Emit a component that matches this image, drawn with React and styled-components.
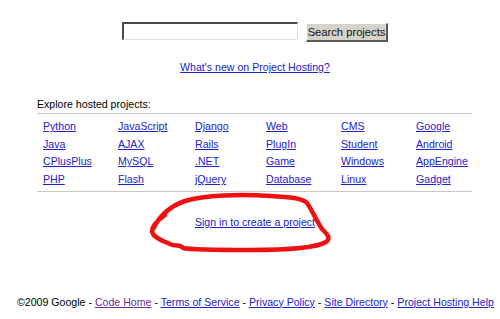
import React from 'react'
import styled, {createGlobalStyle} from 'styled-components'

const Global = createGlobalStyle`
body {
    margin: 0;
    background: #fff;
    font-family: "Liberation Sans", Arial, sans-serif;
    font-size: 10.6px;
    color: #000;
}
`

const Page = styled.div`
    position: relative;
    width: 500px;
    height: 319px;
    overflow: hidden;
`

const SearchRow = styled.form`
    display: flex;
    align-items: flex-start;
    gap: 8px;
    padding: 22px 0 0 122px;
    margin: 0;
`

const SearchInput = styled.input`
    box-sizing: border-box;
    width: 176px;
    height: 18px;
    margin: 0;
    padding: 0 2px;
    border-top: 2px solid #4a4a4a;
    border-left: 2px solid #4a4a4a;
    border-bottom: 1px solid #e4e2dc;
    border-right: 1px solid #e4e2dc;
    background: #fff;
    outline: none;
`

const SearchButton = styled.button`
    box-sizing: border-box;
    width: 82px;
    height: 19px;
    margin: 1px 0 0;
    padding: 0;
    white-space: nowrap;
    background: #d6d3cb;
    border-top: 1px solid #fff;
    border-left: 1px solid #fff;
    border-bottom: 2px solid #5a5a5a;
    border-right: 2px solid #5a5a5a;
    font-family: "Liberation Sans", Arial, sans-serif;
    font-size: 11.2px;
    color: #111;
`

const Link = styled.a`
    color: ${({visited}) => visited ? '#6b2d9c' : '#2222cc'};
    text-decoration: underline;
`

const Centered = styled.div`
    text-align: center;
    margin-top: ${({top}) => top}px;
    padding-left: 10px;
    line-height: 13px;
`

const Explore = styled.div`
    width: 435px;
    margin: 24px 0 0 37px;
`

const ExploreTitle = styled.div`
    line-height: 13px;
    padding-bottom: 2px;
    border-bottom: 1px solid #c8c8c8;
`

const Grid = styled.div`
    display: grid;
    grid-template-columns: 75px 77px 71px 75px 75px 62px;
    grid-auto-rows: 17.7px;
    padding: 6px 0 0;
    border-bottom: 1px solid #c8c8c8;
`

const Cell = styled.div`
    padding-left: 6px;
    line-height: 13px;
    white-space: nowrap;
`

const Footer = styled.div`
    margin-top: 67px;
    padding-left: 17px;
    line-height: 13px;
    white-space: nowrap;
`

const Scribble = styled.svg`
    position: absolute;
    left: 0;
    top: 0;
    pointer-events: none;
`

const rows = [
    ['Python', 'JavaScript', 'Django', 'Web', 'CMS', 'Google'],
    ['Java', 'AJAX', 'Rails', 'PlugIn', 'Student', 'Android'],
    ['CPlusPlus', 'MySQL', '.NET', 'Game', 'Windows', 'AppEngine'],
    ['PHP', 'Flash', 'jQuery', 'Database', 'Linux', 'Gadget'],
]

const footerLinks = [
    {label: 'Code Home', visited: true},
    {label: 'Terms of Service'},
    {label: 'Privacy Policy'},
    {label: 'Site Directory'},
    {label: 'Project Hosting Help'},
]

const App = () => {
    return (
        <Page>
            <Global />
            <SearchRow onSubmit={e => e.preventDefault()}>
                <SearchInput type="text" />
                <SearchButton type="submit">Search projects</SearchButton>
            </SearchRow>
            <Centered top={19}>
                <Link href="#">What's new on Project Hosting?</Link>
            </Centered>
            <Explore>
                <ExploreTitle>Explore hosted projects:</ExploreTitle>
                <Grid>
                    {rows.flat().map(name => (
                        <Cell key={name}><Link href="#">{name}</Link></Cell>
                    ))}
                </Grid>
            </Explore>
            <Centered top={24}>
                <Link href="#">Sign in to create a project</Link>
            </Centered>
            <Footer>
                ©2009 Google
                {footerLinks.map(l => (
                    <React.Fragment key={l.label}>
                        {' - '}<Link href="#" visited={l.visited}>{l.label}</Link>
                    </React.Fragment>
                ))}
            </Footer>
            <Scribble width="500" height="319">
                <path
                    d="M153 229 C160 215 170 206 185 201 C205 195 240 194 270 196 C290 197 302 198 307 203 C312 210 316 220 322 229 C328 235 331 238 326 242 C316 248 290 250 250 250 C215 250 192 250 183 248 C180 244 176 247 170 244 C160 240 152 236 152 231 C152 226 158 220 165 215"
                    fill="none"
                    stroke="#ee1111"
                    strokeWidth="4.5"
                    strokeLinecap="round"
                    strokeLinejoin="round"
                />
            </Scribble>
        </Page>
    )
}

export default App
